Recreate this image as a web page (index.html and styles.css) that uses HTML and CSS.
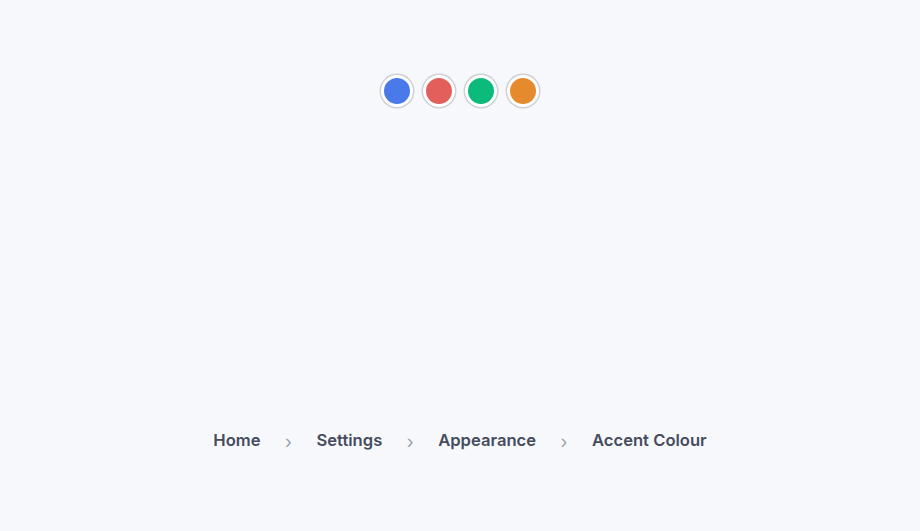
FILE: index.html
```html
<!DOCTYPE html>
<html lang="en">
<head>
<meta charset="utf-8">
<title>Accent Colour</title>
<link rel="stylesheet" href="styles.css">
</head>
<body>
<main class="page">
  <div class="swatches">
    <span class="swatch swatch-blue"></span>
    <span class="swatch swatch-red"></span>
    <span class="swatch swatch-green"></span>
    <span class="swatch swatch-orange"></span>
  </div>
  <nav class="crumbs" aria-label="Breadcrumb">
    <a class="crumb" href="#">Home</a>
    <span class="sep">›</span>
    <a class="crumb" href="#">Settings</a>
    <span class="sep">›</span>
    <a class="crumb" href="#">Appearance</a>
    <span class="sep">›</span>
    <span class="crumb current">Accent Colour</span>
  </nav>
</main>
</body>
</html>
```
FILE: styles.css
```css
html, body {
  margin: 0;
  padding: 0;
  background: #f7f8fb;
}
body {
  font-family: Inter, "Noto Sans", sans-serif;
}
.page {
  width: 920px;
  height: 531px;
  box-sizing: border-box;
  display: flex;
  flex-direction: column;
  align-items: center;
  padding-top: 75px;
}
.swatches {
  display: flex;
  gap: 10px;
}
.swatch {
  display: block;
  width: 26px;
  height: 26px;
  border-radius: 50%;
  border: 3px solid #ffffff;
  box-shadow: 0 0 0 1.5px #cfd1d6;
}
.swatch-blue { background: #4a7aea; }
.swatch-red { background: #e35f5c; }
.swatch-green { background: #0cbb7b; }
.swatch-orange { background: #e68a2e; }
.crumbs {
  margin-top: 321px;
  display: flex;
  align-items: center;
  gap: 24.5px;
}
.crumb {
  font-size: 16.6px;
  font-weight: 600;
  color: #454c5e;
  text-decoration: none;
  line-height: 24px;
}
.sep {
  color: #9aa0ab;
  font-size: 18px;
  line-height: 24px;
  position: relative;
  top: 2px;
}
```
